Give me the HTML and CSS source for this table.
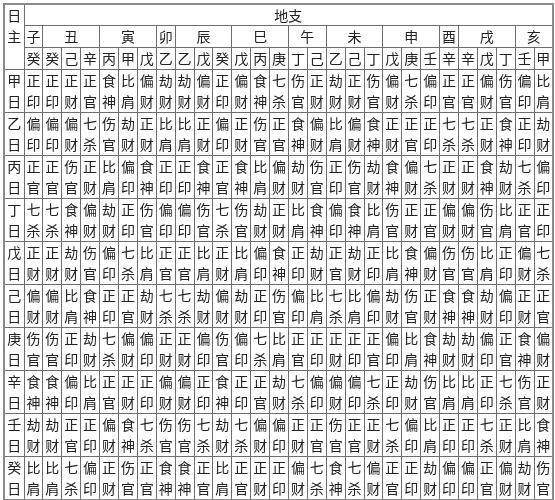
FILE: index.html
```html
<!DOCTYPE html>
<html lang="zh">
<head>
<meta charset="utf-8">
<title>十神表</title>
<link rel="stylesheet" href="styles.css">
</head>
<body>
<table class="grid">
<colgroup><col class="c-first"></colgroup>
<thead>
<tr><th rowspan="3" class="rz">日<br>主</th><th colspan="28" class="h1">地支</th></tr>
<tr class="h2"><th>子</th><th colspan="3">丑</th><th colspan="3">寅</th><th>卯</th><th colspan="3">辰</th><th colspan="3">巳</th><th colspan="2">午</th><th colspan="3">未</th><th colspan="3">申</th><th>酉</th><th colspan="3">戌</th><th colspan="2">亥</th></tr>
<tr class="h3"><th>癸</th><th>癸</th><th>己</th><th>辛</th><th>丙</th><th>甲</th><th>戊</th><th>乙</th><th>乙</th><th>戊</th><th>癸</th><th>戊</th><th>丙</th><th>庚</th><th>丁</th><th>己</th><th>乙</th><th>己</th><th>丁</th><th>戊</th><th>庚</th><th>壬</th><th>辛</th><th>辛</th><th>戊</th><th>丁</th><th>壬</th><th>甲</th></tr>
</thead>
<tbody>
<tr><th>甲<br>日</th><td>正<br>印</td><td>正<br>印</td><td>正<br>财</td><td>正<br>官</td><td>食<br>神</td><td>比<br>肩</td><td>偏<br>财</td><td>劫<br>财</td><td>劫<br>财</td><td>偏<br>财</td><td>正<br>印</td><td>偏<br>财</td><td>食<br>神</td><td>七<br>杀</td><td>伤<br>官</td><td>正<br>财</td><td>劫<br>财</td><td>正<br>财</td><td>伤<br>官</td><td>偏<br>财</td><td>七<br>杀</td><td>偏<br>印</td><td>正<br>官</td><td>正<br>官</td><td>偏<br>财</td><td>伤<br>官</td><td>偏<br>印</td><td>比<br>肩</td></tr>
<tr><th>乙<br>日</th><td>偏<br>印</td><td>偏<br>印</td><td>偏<br>财</td><td>七<br>杀</td><td>伤<br>官</td><td>劫<br>财</td><td>正<br>财</td><td>比<br>肩</td><td>比<br>肩</td><td>正<br>财</td><td>偏<br>印</td><td>正<br>财</td><td>伤<br>官</td><td>正<br>官</td><td>食<br>神</td><td>偏<br>财</td><td>比<br>肩</td><td>偏<br>财</td><td>食<br>神</td><td>正<br>财</td><td>正<br>官</td><td>正<br>印</td><td>七<br>杀</td><td>七<br>杀</td><td>正<br>财</td><td>食<br>神</td><td>正<br>印</td><td>劫<br>财</td></tr>
<tr><th>丙<br>日</th><td>正<br>官</td><td>正<br>官</td><td>伤<br>官</td><td>正<br>财</td><td>比<br>肩</td><td>偏<br>印</td><td>食<br>神</td><td>正<br>印</td><td>正<br>印</td><td>食<br>神</td><td>正<br>官</td><td>食<br>神</td><td>比<br>肩</td><td>偏<br>财</td><td>劫<br>财</td><td>伤<br>官</td><td>正<br>印</td><td>伤<br>官</td><td>劫<br>财</td><td>食<br>神</td><td>偏<br>财</td><td>七<br>杀</td><td>正<br>财</td><td>正<br>财</td><td>食<br>神</td><td>劫<br>财</td><td>七<br>杀</td><td>偏<br>印</td></tr>
<tr><th>丁<br>日</th><td>七<br>杀</td><td>七<br>杀</td><td>食<br>神</td><td>偏<br>财</td><td>劫<br>财</td><td>正<br>印</td><td>伤<br>官</td><td>偏<br>印</td><td>偏<br>印</td><td>伤<br>官</td><td>七<br>杀</td><td>伤<br>官</td><td>劫<br>财</td><td>正<br>财</td><td>比<br>肩</td><td>食<br>神</td><td>偏<br>印</td><td>食<br>神</td><td>比<br>肩</td><td>伤<br>官</td><td>正<br>财</td><td>正<br>官</td><td>偏<br>财</td><td>偏<br>财</td><td>伤<br>官</td><td>比<br>肩</td><td>正<br>官</td><td>正<br>印</td></tr>
<tr><th>戊<br>日</th><td>正<br>财</td><td>正<br>财</td><td>劫<br>财</td><td>伤<br>官</td><td>偏<br>印</td><td>七<br>杀</td><td>比<br>肩</td><td>正<br>官</td><td>正<br>官</td><td>比<br>肩</td><td>正<br>财</td><td>比<br>肩</td><td>偏<br>印</td><td>食<br>神</td><td>正<br>印</td><td>劫<br>财</td><td>正<br>官</td><td>劫<br>财</td><td>正<br>印</td><td>比<br>肩</td><td>食<br>神</td><td>偏<br>财</td><td>伤<br>官</td><td>伤<br>官</td><td>比<br>肩</td><td>正<br>印</td><td>偏<br>财</td><td>七<br>杀</td></tr>
<tr><th>己<br>日</th><td>偏<br>财</td><td>偏<br>财</td><td>比<br>肩</td><td>食<br>神</td><td>正<br>印</td><td>正<br>官</td><td>劫<br>财</td><td>七<br>杀</td><td>七<br>杀</td><td>劫<br>财</td><td>偏<br>财</td><td>劫<br>财</td><td>正<br>印</td><td>伤<br>官</td><td>偏<br>印</td><td>比<br>肩</td><td>七<br>杀</td><td>比<br>肩</td><td>偏<br>印</td><td>劫<br>财</td><td>伤<br>官</td><td>正<br>财</td><td>食<br>神</td><td>食<br>神</td><td>劫<br>财</td><td>偏<br>印</td><td>正<br>财</td><td>正<br>官</td></tr>
<tr><th>庚<br>日</th><td>伤<br>官</td><td>伤<br>官</td><td>正<br>印</td><td>劫<br>财</td><td>七<br>杀</td><td>偏<br>财</td><td>偏<br>印</td><td>正<br>财</td><td>正<br>财</td><td>偏<br>印</td><td>伤<br>官</td><td>偏<br>印</td><td>七<br>杀</td><td>比<br>肩</td><td>正<br>官</td><td>正<br>印</td><td>正<br>财</td><td>正<br>印</td><td>正<br>官</td><td>偏<br>印</td><td>比<br>肩</td><td>食<br>神</td><td>劫<br>财</td><td>劫<br>财</td><td>偏<br>印</td><td>正<br>官</td><td>食<br>神</td><td>偏<br>财</td></tr>
<tr><th>辛<br>日</th><td>食<br>神</td><td>食<br>神</td><td>偏<br>印</td><td>比<br>肩</td><td>正<br>官</td><td>正<br>财</td><td>正<br>印</td><td>偏<br>财</td><td>偏<br>财</td><td>正<br>印</td><td>食<br>神</td><td>正<br>印</td><td>正<br>官</td><td>劫<br>财</td><td>七<br>杀</td><td>偏<br>印</td><td>偏<br>财</td><td>偏<br>印</td><td>七<br>杀</td><td>正<br>印</td><td>劫<br>财</td><td>伤<br>官</td><td>比<br>肩</td><td>比<br>肩</td><td>正<br>印</td><td>七<br>杀</td><td>伤<br>官</td><td>正<br>财</td></tr>
<tr><th>壬<br>日</th><td>劫<br>财</td><td>劫<br>财</td><td>正<br>官</td><td>正<br>印</td><td>偏<br>财</td><td>食<br>神</td><td>七<br>杀</td><td>伤<br>官</td><td>伤<br>官</td><td>七<br>杀</td><td>劫<br>财</td><td>七<br>杀</td><td>偏<br>财</td><td>偏<br>印</td><td>正<br>财</td><td>正<br>官</td><td>伤<br>官</td><td>正<br>官</td><td>正<br>财</td><td>七<br>杀</td><td>偏<br>印</td><td>比<br>肩</td><td>正<br>印</td><td>正<br>印</td><td>七<br>杀</td><td>正<br>财</td><td>比<br>肩</td><td>食<br>神</td></tr>
<tr><th>癸<br>日</th><td>比<br>肩</td><td>比<br>肩</td><td>七<br>杀</td><td>偏<br>印</td><td>正<br>财</td><td>伤<br>官</td><td>正<br>官</td><td>食<br>神</td><td>食<br>神</td><td>正<br>官</td><td>比<br>肩</td><td>正<br>官</td><td>正<br>财</td><td>正<br>印</td><td>偏<br>财</td><td>七<br>杀</td><td>食<br>神</td><td>七<br>杀</td><td>偏<br>财</td><td>正<br>官</td><td>正<br>印</td><td>劫<br>财</td><td>偏<br>印</td><td>偏<br>印</td><td>正<br>官</td><td>偏<br>财</td><td>劫<br>财</td><td>伤<br>官</td></tr>
</tbody>
</table>
</body>
</html>
```
FILE: styles.css
```css
html, body {
  margin: 0;
  padding: 0;
  background: #ffffff;
}
body {
  padding: 3px 0 0 3px;
  font-family: "Noto Sans CJK SC", "Noto Sans", sans-serif;
  color: #222222;
  -webkit-font-smoothing: antialiased;
}
.grid {
  border-collapse: collapse;
  table-layout: fixed;
  width: 551px;
  border: 2px solid #8a8a8a;
  filter: grayscale(100%);
}
.c-first {
  width: 20px;
}
.grid th,
.grid td {
  border: 1px solid #6e6e6e;
  padding: 0;
  font-weight: normal;
  font-size: 14px;
  line-height: 21px;
  text-align: center;
  vertical-align: middle;
}
.grid .rz {
  vertical-align: top;
}
.grid .h1 {
  height: 20px;
  line-height: 20px;
}
.grid .h2 th,
.grid .h3 th {
  height: 21px;
}
.grid tbody td,
.grid tbody th {
  height: 42px;
}
```
